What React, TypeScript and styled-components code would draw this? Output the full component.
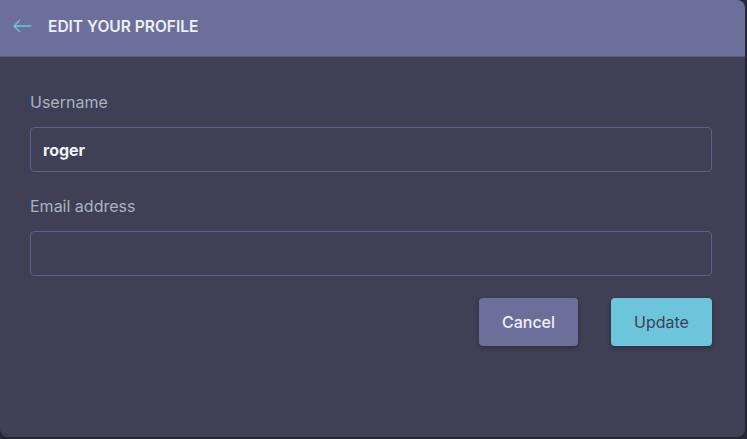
import React from "react";
import styled, { createGlobalStyle } from "styled-components";

const Global = createGlobalStyle`
  html, body { margin: 0; padding: 0; background: #272733; }
  body { font-family: Inter, "Noto Sans", sans-serif; }
  * { box-sizing: border-box; }
`;

const Card = styled.div`
  width: 745px;
  height: 437px;
  background: #3f4055;
  border-radius: 0 8px 8px 8px;
  overflow: hidden;
  display: flex;
  flex-direction: column;
`;

const Header = styled.div`
  height: 57px;
  background: #6d6f9b;
  border-bottom: 1px solid #5b5d85;
  display: flex;
  align-items: center;
  padding: 0 0 4px 12px;
  gap: 16px;
`;

const Title = styled.h1`
  margin: 0;
  font-size: 15.5px;
  font-weight: 600;
  color: #eef0f6;
  letter-spacing: 0;
`;

const Body = styled.form`
  display: flex;
  flex-direction: column;
  padding: 35px 33px 0 30px;
`;

const Label = styled.label`
  font-size: 16px;
  color: #aab3c2;
  line-height: 20px;
  margin-bottom: 15px;
`;

const Field = styled.div`
  display: flex;
  flex-direction: column;
  margin-bottom: 24px;
`;

const Input = styled.input`
  height: 45px;
  width: 100%;
  background: transparent;
  border: 1px solid #5e5f8c;
  border-radius: 4px;
  padding: 0 12px;
  font-family: inherit;
  font-size: 16px;
  font-weight: 700;
  color: #f2f3f8;
  outline: none;
`;

const Actions = styled.div`
  display: flex;
  justify-content: flex-end;
  gap: 33px;
  margin-top: -2px;
`;

const Button = styled.button<{ $primary?: boolean }>`
  height: 48px;
  width: ${(p) => (p.$primary ? "101px" : "99px")};
  border: none;
  border-radius: 4px;
  font-family: inherit;
  font-size: 16px;
  font-weight: ${(p) => (p.$primary ? 400 : 500)};
  background: ${(p) => (p.$primary ? "#6dc5dc" : "#6d6f9b")};
  color: ${(p) => (p.$primary ? "#3f4055" : "#eef0f6")};
  box-shadow: 0 2px 5px rgba(0, 0, 0, 0.3);
  cursor: pointer;
`;

const Back = () => (
  <svg width="20" height="14" viewBox="0 0 20 14" fill="none" stroke="#6dc5dc" strokeWidth="1.3" strokeLinecap="round" strokeLinejoin="round">
    <path d="M19 7H2M7.5 1.5L2 7l5.5 5.5" />
  </svg>
);

export default function App() {
  return (
    <>
      <Global />
      <Card>
        <Header>
          <Back />
          <Title>EDIT YOUR PROFILE</Title>
        </Header>
        <Body onSubmit={(e) => e.preventDefault()}>
          <Field>
            <Label>Username</Label>
            <Input defaultValue="roger" />
          </Field>
          <Field>
            <Label>Email address</Label>
            <Input defaultValue="" />
          </Field>
          <Actions>
            <Button type="button">Cancel</Button>
            <Button type="submit" $primary>Update</Button>
          </Actions>
        </Body>
      </Card>
    </>
  );
}
